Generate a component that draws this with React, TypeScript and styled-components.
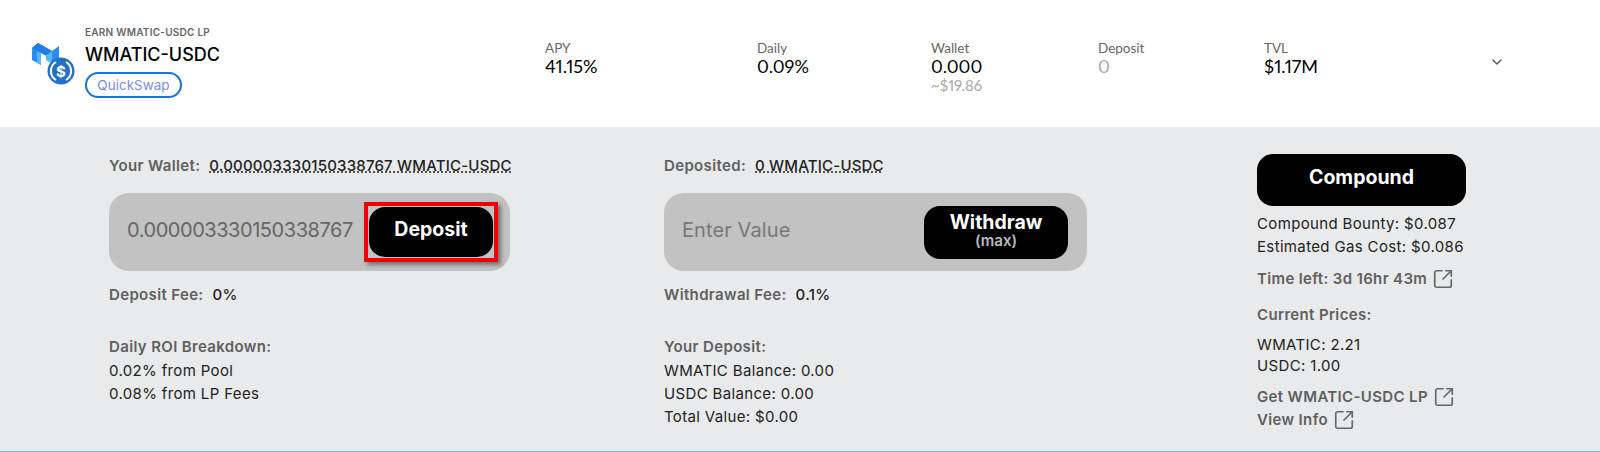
import styled, { createGlobalStyle } from "styled-components";
import { ChevronDown, SquareArrowOutUpRight } from "lucide-react";

const GlobalStyle = createGlobalStyle`
  html, body {
    margin: 0;
    background: #fff;
  }
  * {
    box-sizing: border-box;
  }
`;

const Page = styled.div`
  display: flex;
  flex-direction: column;
  width: 1600px;
  height: 452px;
  overflow: hidden;
  font-family: Inter, "Liberation Sans", sans-serif;
  color: #000;
`;

const Header = styled.div`
  display: flex;
  align-items: flex-start;
  height: 127px;
  flex-shrink: 0;
  background: #fff;
`;

const PoolInfo = styled.div`
  display: flex;
  width: 545px;
  padding: 26px 0 0 32px;
`;

const PoolLogo = styled.svg`
  width: 46px;
  height: 42px;
  margin: 17px 7px 0 0;
  flex-shrink: 0;
`;

const PoolText = styled.div`
  display: flex;
  flex-direction: column;
  align-items: flex-start;
`;

const Earn = styled.div`
  font-size: 10px;
  line-height: 12px;
  font-weight: 600;
  color: #666;
  letter-spacing: 0.25px;
`;

const PoolName = styled.div`
  margin-top: 5px;
  font-size: 18px;
  line-height: 24px;
  font-weight: 500;
`;

const Badge = styled.div`
  margin-top: 5px;
  width: 97px;
  height: 26px;
  border: 2px solid #1a73d9;
  border-radius: 13px;
  display: flex;
  align-items: center;
  justify-content: center;
  font-size: 13.5px;
  color: #7d8fe0;
`;

const Stat = styled.div<{ $width: number }>`
  width: ${(p) => p.$width}px;
  padding-top: 41px;
  font-family: Lato, "Liberation Sans", sans-serif;
  font-variant-numeric: proportional-nums;
`;

const StatLabel = styled.div`
  font-size: 13.5px;
  line-height: 15px;
  color: #666;
`;

const StatValue = styled.div<{ $muted?: boolean }>`
  font-size: 18px;
  line-height: 20px;
  color: ${(p) => (p.$muted ? "#aaa" : "#000")};
`;

const StatNote = styled.div`
  margin-top: 1px;
  font-size: 15px;
  line-height: 16px;
  color: #aaa;
`;

const Toggle = styled.div`
  margin-left: -39px;
  padding-top: 54px;
  color: #555;
  display: flex;
`;

const Details = styled.div`
  flex: 1;
  display: grid;
  grid-template-columns: 555px 593px 1fr;
  padding-left: 109px;
  background: #e9eaec;
  border-bottom: 1px solid #5cc6e0;
`;

const Column = styled.div`
  display: flex;
  flex-direction: column;
  align-items: flex-start;
  padding-top: 30px;
`;

const SideColumn = styled(Column)`
  padding-top: 27px;
`;

const Line = styled.div<{ $top?: number; $dark?: boolean; $bold?: boolean }>`
  display: flex;
  align-items: center;
  margin-top: ${(p) => p.$top ?? 0}px;
  height: 18px;
  font-size: 15px;
  line-height: 18px;
  letter-spacing: 0.35px;
  white-space: nowrap;
  font-weight: ${(p) => (p.$bold ? 600 : 400)};
  color: ${(p) => (p.$dark ? "#222" : "#5f5f5f")};
`;

const Value = styled.span`
  margin-left: 9px;
  color: #222;
  font-weight: 500;
`;

const Dotted = styled(Value)`
  letter-spacing: 0.2px;
  text-decoration: underline dotted #222;
  text-underline-offset: 1px;
`;

const InputBox = styled.div<{ $width: number; $right: number }>`
  display: flex;
  align-items: center;
  justify-content: space-between;
  width: ${(p) => p.$width}px;
  height: 78px;
  margin: 18px 0 15px;
  padding: 0 ${(p) => p.$right}px 0 18px;
  border-radius: 20px;
  background: #c2c2c2;
`;

const AmountInput = styled.input<{ $tight?: boolean }>`
  width: 226px;
  padding: 0 0 4px;
  border: 0;
  outline: 0;
  background: transparent;
  font-family: inherit;
  font-size: 20px;
  letter-spacing: ${(p) => (p.$tight ? "-0.45px" : "0.1px")};
  color: #666;
  &::placeholder {
    color: #777;
    opacity: 1;
  }
`;

const ActionButton = styled.button<{ $width: number; $height: number }>`
  display: flex;
  flex-direction: column;
  align-items: center;
  justify-content: center;
  width: ${(p) => p.$width}px;
  height: ${(p) => p.$height}px;
  padding: 0 0 5px;
  border: 0;
  border-radius: 16px;
  background: #000;
  color: #fff;
  font-family: inherit;
  font-size: 19.5px;
  line-height: 21px;
  font-weight: 700;
`;

const Highlight = styled.div`
  display: flex;
  padding: 1px;
  border: 4px solid #f00000;
  box-shadow: 3px 3px 4px rgba(0, 0, 0, 0.4);
`;

const Max = styled.span`
  font-size: 15px;
  line-height: 15px;
  font-weight: 600;
  color: #bbb;
`;

const LinkIcon = styled(SquareArrowOutUpRight)`
  margin-left: 5px;
  color: #666;
`;

const StatItem = ({ label, value, note, muted, width }: { label: string; value: string; note?: string; muted?: boolean; width: number }) => (
  <Stat $width={width}>
    <StatLabel>{label}</StatLabel>
    <StatValue $muted={muted}>{value}</StatValue>
    {note && <StatNote>{note}</StatNote>}
  </Stat>
);

export default function App() {
  return (
    <Page>
      <GlobalStyle />
      <Header>
        <PoolInfo>
          <PoolLogo viewBox="0 0 46 42">
            <path d="M0 5 L6 0 L20 8 L27 3 L27 16 L19 21 L19 15 L9 10 L9 22 L0 17 Z" fill="#2b8df0" />
            <path d="M0 5 L6 0 L20 8 L14 12.5 L9 10 Z" fill="#1f7fe6" />
            <path d="M9 10 L9 22 L5 19.5 L5 8 Z" fill="#56b8fa" />
            <path d="M14 12.5 L20 8 L20 21 L14 17 Z" fill="#56b8fa" />
            <circle cx="29" cy="28" r="13.5" fill="#2570c4" />
            <path d="M24 19 A10.5 10.5 0 0 0 24 37 M34 19 A10.5 10.5 0 0 1 34 37" fill="none" stroke="#fff" strokeWidth="2" />
            <text x="29" y="33.5" fontSize="15" fontWeight="700" fill="#fff" textAnchor="middle" fontFamily="Inter, sans-serif">$</text>
          </PoolLogo>
          <PoolText>
            <Earn>EARN WMATIC-USDC LP</Earn>
            <PoolName>WMATIC-USDC</PoolName>
            <Badge>QuickSwap</Badge>
          </PoolText>
        </PoolInfo>
        <StatItem width={212} label="APY" value="41.15%" />
        <StatItem width={174} label="Daily" value="0.09%" />
        <StatItem width={167} label="Wallet" value="0.000" note="~$19.86" />
        <StatItem width={166} label="Deposit" value="0" muted />
        <StatItem width={264} label="TVL" value="$1.17M" />
        <Toggle>
          <ChevronDown size={16} strokeWidth={2} />
        </Toggle>
      </Header>
      <Details>
        <Column>
          <Line $bold>
            Your Wallet: <Dotted>0.000003330150338767 WMATIC-USDC</Dotted>
          </Line>
          <InputBox $width={401} $right={12}>
            <AmountInput $tight readOnly value="0.000003330150338767" />
            <Highlight>
              <ActionButton $width={124} $height={50}>Deposit</ActionButton>
            </Highlight>
          </InputBox>
          <Line $bold>
            Deposit Fee: <Value>0%</Value>
          </Line>
          <Line $top={34} $bold>Daily ROI Breakdown:</Line>
          <Line $top={6} $dark>0.02% from Pool</Line>
          <Line $top={5} $dark>0.08% from LP Fees</Line>
        </Column>
        <Column>
          <Line $bold>
            Deposited: <Dotted>0 WMATIC-USDC</Dotted>
          </Line>
          <InputBox $width={423} $right={19}>
            <AmountInput readOnly placeholder="Enter Value" />
            <ActionButton $width={144} $height={53}>
              Withdraw
              <Max>(max)</Max>
            </ActionButton>
          </InputBox>
          <Line $bold>
            Withdrawal Fee: <Value>0.1%</Value>
          </Line>
          <Line $top={34} $bold>Your Deposit:</Line>
          <Line $top={6} $dark>WMATIC Balance: 0.00</Line>
          <Line $top={5} $dark>USDC Balance: 0.00</Line>
          <Line $top={5} $dark>Total Value: $0.00</Line>
        </Column>
        <SideColumn>
          <ActionButton $width={209} $height={52}>Compound</ActionButton>
          <Line $top={9} $dark>Compound Bounty: $0.087</Line>
          <Line $top={5} $dark>Estimated Gas Cost: $0.086</Line>
          <Line $top={14} $bold>
            Time left: 3d 16hr 43m <LinkIcon size={22} strokeWidth={1.8} />
          </Line>
          <Line $top={18} $bold>Current Prices:</Line>
          <Line $top={12} $dark>WMATIC: 2.21</Line>
          <Line $top={3} $dark>USDC: 1.00</Line>
          <Line $top={13} $bold>
            Get WMATIC-USDC LP <LinkIcon size={22} strokeWidth={1.8} />
          </Line>
          <Line $top={5} $bold>
            View Info <LinkIcon size={22} strokeWidth={1.8} />
          </Line>
        </SideColumn>
      </Details>
    </Page>
  );
}
